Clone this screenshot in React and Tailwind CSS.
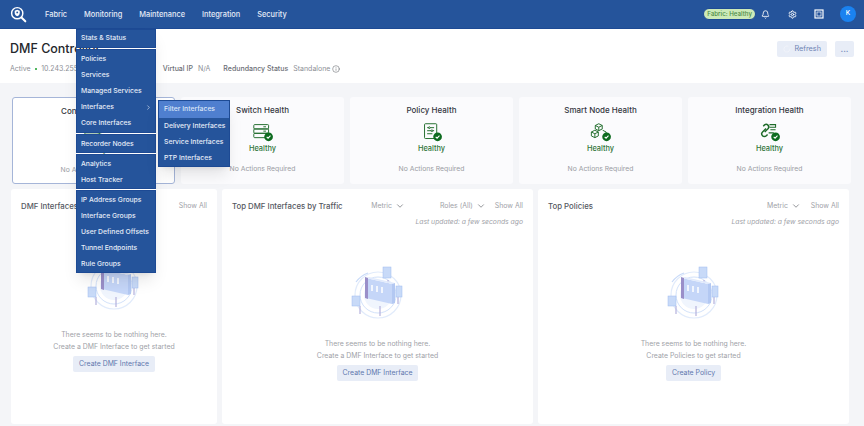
import { Bell, ChevronDown, ChevronRight, Info, LoaderCircle, Settings } from 'lucide-react';

const navItems = ['Fabric', 'Monitoring', 'Maintenance', 'Integration', 'Security'];

const menuGroups = [
  ['Stats & Status'],
  ['Policies', 'Services', 'Managed Services', 'Interfaces', 'Core Interfaces'],
  ['Recorder Nodes'],
  ['Analytics', 'Host Tracker'],
  ['IP Address Groups', 'Interface Groups', 'User Defined Offsets', 'Tunnel Endpoints', 'Rule Groups'],
];

const subItems = ['Filter Interfaces', 'Delivery Interfaces', 'Service Interfaces', 'PTP Interfaces'];

function Logo() {
  return (
    <svg viewBox="0 0 20 20" className="h-[17px] w-[17px]" fill="none" stroke="white">
      <circle cx="8.5" cy="8.5" r="6.6" strokeWidth="1.7" />
      <path d="M13.5 13.5l4.5 4.5" strokeWidth="2.4" strokeLinecap="round" />
      <path d="M8.5 4.5l3 1.2v2.4c0 1.9-1.3 3.2-3 3.9-1.7-.7-3-2-3-3.9V5.700z" fill="white" stroke="none" />
      <circle cx="8.500" cy="7.500" r="1.100" fill="#25549b" stroke="none" />
    </svg>
  );
}

function ServerIcon() {
  return (
    <g>
      <rect x="3" y="3" width="17" height="5" rx="1" />
      <rect x="3" y="8" width="17" height="5" rx="1" />
      <rect x="3" y="13" width="17" height="5" rx="1" />
      <path d="M14 5.500h3M14 10.500h3" />
    </g>
  );
}

function PolicyIcon() {
  return (
    <g>
      <rect x="5" y="2" width="14" height="17" rx="1" />
      <path d="M8 6.500h8M8 10h8M8 13.500h6" />
      <circle cx="10.500" cy="6.500" r="1" fill="white" />
      <circle cx="13.500" cy="10" r="1" fill="white" />
    </g>
  );
}

function NodeIcon() {
  return (
    <g>
      <path d="M11 2l4 2v4l-4 2-4-2V4z" />
      <path d="M7 4l4 2 4-2M11 6v4" />
      <path d="M6.500 9.500l4 2v4.500l-4 2-4-2v-4.500z" />
      <path d="M2.500 11.500l4 2 4-2M6.500 13.500v4.500" />
      <path d="M15.500 9.500l4 2v3" />
    </g>
  );
}

function LinkIcon() {
  return (
    <g strokeWidth="1.700">
      <path d="M9 7.500l-4 4a3 3 0 0 0 4.300 4.300l1.500-1.500" />
      <path d="M7.500 11.500l4-4a3 3 0 0 0-4.200-4.200L5.800 4.800" />
      <path d="M13 3h7v3h-7M14 9h6M12 12.500h6" strokeWidth="1.200" />
    </g>
  );
}

function HealthIcon({ children }) {
  return (
    <svg viewBox="0 0 26 23" className="h-[20px] w-[23px]" fill="none" stroke="#1e6b2a" strokeWidth="1.100">
      {children}
      <circle cx="20" cy="17" r="5" fill="#0d6b1f" stroke="none" />
      <path d="M17.800 17l1.600 1.600 2.800-3" stroke="white" strokeWidth="1.200" />
    </svg>
  );
}

function HealthCard({ title, icon, selected }) {
  return (
    <div
      className={`flex h-[87px] w-[163px] shrink-0 flex-col items-center rounded-[3px] pt-[7px] ${
        selected ? 'border border-[#a5b5d8] bg-white' : 'bg-[#fbfbfd]'
      }`}
    >
      <div className="text-[8px] leading-[12px] font-medium text-[#33363d]">{title}</div>
      <div className="mt-[6px]">
        <HealthIcon>{icon}</HealthIcon>
      </div>
      <div className="mt-[2px] text-[7.400px] leading-[10px] font-medium text-[#2f7337]">Healthy</div>
      <div className="mt-[9px] text-[6.800px] leading-[12px] text-[#9a9ca3]">No Actions Required</div>
    </div>
  );
}

function Illustration() {
  return (
    <svg viewBox="0 0 80 64" className="h-[64px] w-[80px]" fill="none">
      <circle cx="40" cy="33" r="23" stroke="#e1ebfb" strokeWidth="1.200" />
      <circle cx="40" cy="33" r="18" stroke="#d3e2fa" />
      <circle cx="40" cy="33" r="14" fill="#f0f5fd" />
      <path d="M18 20a26 26 0 0 1 12-9" stroke="#c8daf8" strokeWidth="1.200" />
      <path d="M42 44v10M22 44v8M60 34v8M50 18v6" stroke="#b5b1dc" strokeWidth="1.200" />
      <path d="M28 16l26 6v20l-26-6z" fill="#c5d6f8" />
      <path d="M28 16l3-1 26 6-3 1z" fill="#e2ebfc" />
      <path d="M54 22l3-1v20l-3 1z" fill="#b3c8f2" />
      <path d="M27 15l3 1v21l-3-1z" fill="#9a8fc9" />
      <path d="M34 23v6M39 24v6M44 25v6" stroke="#f1f5fd" strokeWidth="2" />
      <rect x="45" y="5" width="8" height="11" fill="#c8daf8" stroke="#9fbcf0" strokeWidth="0.500" />
      <rect x="58" y="24" width="6" height="11" fill="#c8daf8" stroke="#9fbcf0" strokeWidth="0.500" />
      <rect x="14" y="34" width="8" height="10" fill="#c8daf8" stroke="#9fbcf0" strokeWidth="0.500" />
    </svg>
  );
}

function EmptyState({ line, action, className }) {
  return (
    <div className={`flex flex-col items-center ${className}`}>
      <Illustration />
      <div className="mt-[12px] text-[6.900px] leading-[12px] text-[#a0a2a8]">There seems to be nothing here.</div>
      <div className="text-[6.900px] leading-[12px] text-[#a0a2a8]">{line}</div>
      <button type="button" className="mt-[3px] h-[16px] rounded-[2px] bg-[#e8edf7] px-[6px] text-[6.900px] text-[#5f78ae]">
        {action}
      </button>
    </div>
  );
}

function Filter({ label, className }) {
  return (
    <span className={`flex items-center gap-[3px] text-[6.900px] text-[#a0a2a8] ${className}`}>
      {label}
      <ChevronDown className="h-[10px] w-[10px] text-[#55585f]" strokeWidth={1.500} />
    </span>
  );
}

function Panel({ title, width, filters, updated, children }) {
  return (
    <div className={`flex shrink-0 flex-col rounded-[3px] bg-white px-[10px] pt-[12px] ${width}`}>
      <div className="flex h-[11px] items-center">
        <span className="text-[7.800px] font-medium text-[#55585f]">{title}</span>
        <div className="ml-auto flex items-center">
          {filters.map((f) => (
            <Filter key={f.label} label={f.label} className={f.className} />
          ))}
          <span className="text-[6.900px] text-[#a0a2a8]">Show All</span>
        </div>
      </div>
      {updated && <div className="mt-[5px] text-right text-[6.800px] leading-[10px] text-[#a0a2a8] italic">Last updated: a few seconds ago</div>}
      {children}
    </div>
  );
}

function Menu() {
  return (
    <div className="absolute top-[29px] left-[76px] z-10 w-[80px] text-[6.800px] font-medium text-[#e6ecf7] shadow-lg">
      {menuGroups.map((group, i) => (
        <div
          key={i}
          className={`border border-[#1d4a94] bg-[#25549b] ${i > 0 ? 'mt-[1px]' : ''} ${i === 0 ? 'pb-px' : i === 1 ? 'py-px' : 'pt-px'}`}
        >
          {group.map((item) => (
            <div key={item} className="flex h-[16px] items-center justify-between pr-[3px] pl-[4px] whitespace-nowrap">
              {item}
              {item === 'Interfaces' && <ChevronRight className="h-[7px] w-[7px]" strokeWidth={2} />}
            </div>
          ))}
        </div>
      ))}
      <div className="absolute top-[71px] left-[82px] w-[72px] border border-[#1d4a94] bg-[#25549b] shadow-lg">
        {subItems.map((item, i) => (
          <div
            key={item}
            className={`flex items-center pl-[5px] whitespace-nowrap ${i === 0 ? 'h-[17px] bg-[#4f7fcf] text-[#dbe5f7]' : 'h-[16px]'}`}
          >
            {item}
          </div>
        ))}
      </div>
    </div>
  );
}

export default function App() {
  return (
    <div className="relative flex h-[426px] w-[864px] flex-col overflow-hidden bg-[#f4f5f8] font-['Inter',sans-serif]">
      <header className="flex h-[29px] shrink-0 items-center border-b border-[#1d4a94] bg-[#25549b] pr-[8px] pl-[10px] text-[7.400px] font-medium text-[#e6ecf7]">
        <Logo />
        <nav className="mt-[2px] ml-[18px] flex gap-[17px]">
          {navItems.map((item) => (
            <span key={item}>{item}</span>
          ))}
        </nav>
        <div className="ml-auto flex items-center">
          <span className="rounded-full border border-[#1d4a94] bg-[#cdeab8] px-[3px] py-[1px] text-[6.200px] leading-[8px] text-[#4c8a45]">Fabric: Healthy</span>
          <Bell className="ml-[5px] h-[9px] w-[9px] text-white" strokeWidth={2.200} />
          <Settings className="ml-[18px] h-[9px] w-[9px] text-white" strokeWidth={2.500} />
          <svg viewBox="0 0 10 10" className="ml-[17px] h-[10px] w-[10px]" fill="none" stroke="white" strokeWidth="1.200">
            <rect x="1" y="1" width="8" height="8" />
            <rect x="3" y="3" width="4" height="4" strokeWidth="0.700" />
          </svg>
          <span className="ml-[16px] flex h-[16px] w-[16px] items-center justify-center rounded-full bg-[#1a82f0] text-[6.500px] text-white">K</span>
        </div>
      </header>

      <section className="flex h-[54px] shrink-0 justify-between bg-white pt-[12px] pr-[10px] pl-[10px]">
        <div>
          <h1 className="text-[12.500px] leading-[16px] font-medium text-[#25272c]">DMF Controller</h1>
          <div className="mt-[7px] flex items-center text-[7px] leading-[10px] text-[#8d8f96]">
            <span>Active</span>
            <span className="mx-[4px] h-[2.500px] w-[2.500px] rounded-full bg-[#18a02c]" />
            <span>10.243.255.120</span>
            <span className="ml-[72px] font-medium text-[#6b6e75]">Virtual IP</span>
            <span className="ml-[5px]">N/A</span>
            <span className="ml-[13px] font-medium text-[#6b6e75]">Redundancy Status</span>
            <span className="ml-[5px]">Standalone</span>
            <Info className="ml-[2px] h-[8px] w-[8px] text-[#55585f]" strokeWidth={1.500} />
          </div>
        </div>
        <div className="flex gap-[8px]">
          <button type="button" className="flex h-[16px] items-center gap-[3px] rounded-[2px] bg-[#e8edf7] px-[6px] text-[7.300px] text-[#6f84b3]">
            <LoaderCircle className="h-[8px] w-[8px] text-[#f4f6fb]" />
            Refresh
          </button>
          <button type="button" className="h-[16px] w-[19px] rounded-[2px] bg-[#e8edf7] text-[8px] leading-[12px] font-bold text-[#6f84b3]">...</button>
        </div>
      </section>

      <div className="mt-[14px] flex gap-[6px] pl-[12px]">
        <HealthCard selected title="Controller Health" icon={<ServerIcon />} />
        <HealthCard title="Switch Health" icon={<ServerIcon />} />
        <HealthCard title="Policy Health" icon={<PolicyIcon />} />
        <HealthCard title="Smart Node Health" icon={<NodeIcon />} />
        <HealthCard title="Integration Health" icon={<LinkIcon />} />
      </div>

      <div className="mt-[5px] flex gap-[5px] pl-[11px]">
        <Panel title="DMF Interfaces by Traffic" width="h-[235px] w-[206px]" filters={[]}>
          <EmptyState className="mt-[41px]" line="Create a DMF Interface to get started" action="Create DMF Interface" />
        </Panel>
        <Panel
          title="Top DMF Interfaces by Traffic"
          width="h-[235px] w-[311px]"
          filters={[
            { label: 'Metric', className: 'mr-[35px]' },
            { label: 'Roles (All)', className: 'mr-[9px]' },
          ]}
          updated
        >
          <EmptyState className="mt-[35px]" line="Create a DMF Interface to get started" action="Create DMF Interface" />
        </Panel>
        <Panel title="Top Policies" width="h-[235px] w-[311px]" filters={[{ label: 'Metric', className: 'mr-[10px]' }]} updated>
          <EmptyState className="mt-[35px]" line="Create Policies to get started" action="Create Policy" />
        </Panel>
      </div>

      <Menu />
    </div>
  );
}
